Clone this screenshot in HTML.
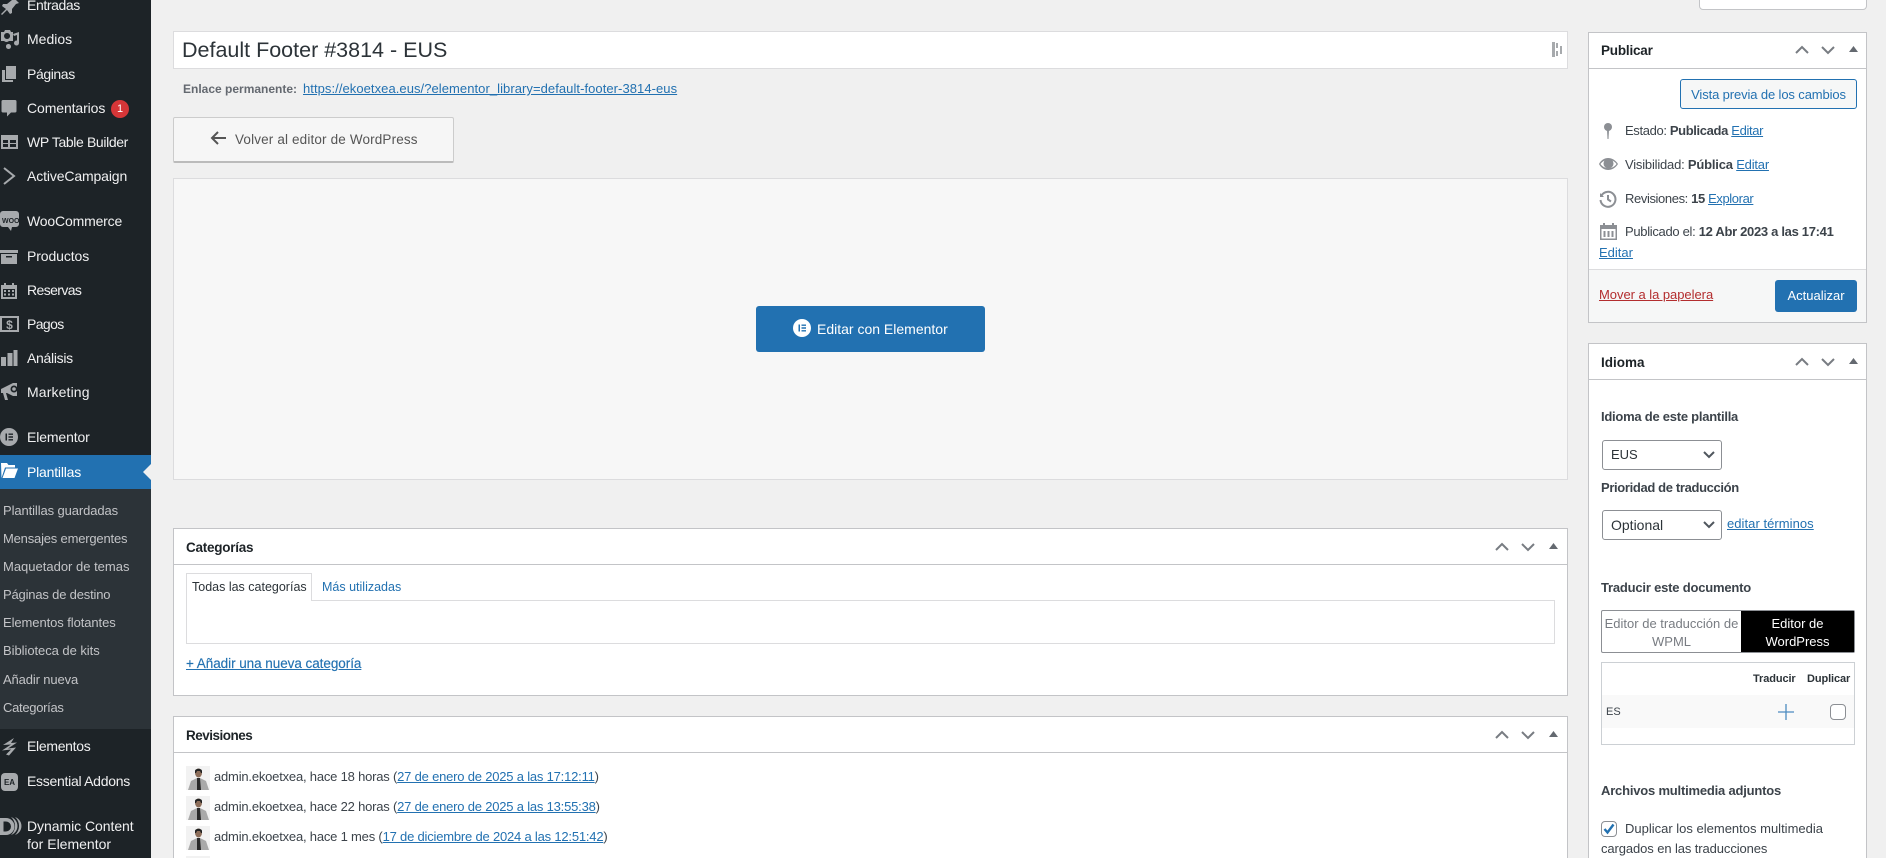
<!DOCTYPE html>
<html lang="es"><head><meta charset="utf-8"><title>Default Footer #3814 - EUS</title>
<style>
*{box-sizing:border-box}
html,body{margin:0;padding:0;width:1886px;height:858px;overflow:hidden;background:#f0f0f0}
#page{position:relative;width:1886px;height:858px;overflow:hidden;background:#f0f0f0;font-family:"Liberation Sans",sans-serif;font-size:13px;color:#3c434a}
.a{position:absolute}
.t{position:absolute;white-space:nowrap;height:20px;line-height:20px}
a{color:#2271b1;text-decoration:underline}
b{font-weight:700}
#side{position:absolute;left:0;top:0;width:151px;height:858px;background:#1d2327}
#side .t{left:27px;font-size:14px;color:#f0f0f1}
#side .s{left:3px;font-size:13px;color:#c3c4c7;letter-spacing:-.1px}
#side svg{position:absolute;left:0;top:0}
.box{position:absolute;background:#fff;border:1px solid #c3c4c7}
.hd{position:absolute;height:1px;width:277px;left:1589px;background:#c3c4c7}
.hm{position:absolute;height:1px;width:1393px;left:174px;background:#c3c4c7}
.h{font-size:13.500px;font-weight:700;color:#1d2327}
.sel{position:absolute;width:120px;height:30px;border:1px solid #8c8f94;border-radius:3px;background:#fff;color:#2c3338;font-size:14px;line-height:28px;padding-left:8px}
.lb{font-weight:700;color:#3c434a;font-size:13px}
</style></head><body>
<div id="page">

<div id="side">
<svg width="151" height="858" viewBox="0 0 151 858" fill="#a7aaad">
<path d="M13 -3l6 6-3 1-4 5 0 4-2 1-3-4-5 5-1-1 5-5-4-3 1-2 4 0 5-4z"/>
<path d="M1 32h3l1-2h5l1 2h2v9h-4a4 4 0 0 1-5 0H1z M7 33a3 3 0 1 0 .1 0z" fill-rule="evenodd"/><path d="M13 34l6-2v11a2.500 2.500 0 1 1-2-2.400V35l-3 1z M8 44a2.500 2.500 0 1 0 3 2.500 2.500 2.500 0 0 0-3-2.500z"/>
<path d="M6 66h10v13H6z M2 70h3v10h8v2H2z"/>
<path d="M3 100h12a1.500 1.500 0 0 1 1.500 1.500V111a1.500 1.500 0 0 1-1.500 1.500h-4l-4 4v-4H3A1.500 1.500 0 0 1 1.500 111v-9.500A1.500 1.500 0 0 1 3 100z"/>
<path d="M1 135h17v14H1z M3 140v3h5v-3z M10 140v3h6v-3z M3 144v3h5v-3z M10 144v3h6v-3z" fill-rule="evenodd"/>
<path d="M4 168l10 8-10 8" fill="none" stroke="#a7aaad" stroke-width="2"/>
<path d="M3 211h13a3 3 0 0 1 3 3v10a3 3 0 0 1-3 3h-4l-1 4-3-4H3a3 3 0 0 1-3-3v-10a3 3 0 0 1 3-3z"/>
<text x="2" y="223" font-size="7" font-weight="700" fill="#1d2327" font-family="Liberation Sans">WOO</text>
<path d="M0 250h18v3H0z M1 254h16v10H1z M6 256v1.500h6V256z" fill-rule="evenodd"/>
<path d="M1 285h3v-2h2v2h6v-2h2v2h3v14H1z M3 289v8h12v-8z" fill-rule="evenodd"/><path d="M4 290h2v2H4z M8 290h2v2H8z M12 290h2v2h-2z M4 293.500h2v2H4z M8 293.500h2v2H8z M12 293.500h2v2h-2z"/>
<path d="M0 316h19v16H0z M2 318v12h15v-12z" fill-rule="evenodd"/>
<text x="9.500" y="329" font-size="12" font-weight="700" text-anchor="middle" font-family="Liberation Sans">$</text>
<path d="M1 357h5v9H1z M7.500 353h5v13h-5z M13.500 350h4v16h-4z"/>
<path d="M1 389l12-6 4 0v13l-4 0-6-3-1 0 2 7h-3l-2-7-2 0z"/><circle cx="14" cy="389" r="3.500" fill="#1d2327"/><circle cx="14" cy="389" r="1.800"/>
<path d="M9 428a9 9 0 1 1 0 18 9 9 0 0 1 0-18z M5.500 433.500v7h1.500v-7z M8.500 433.500v1.400h4.500v-1.400z M8.500 436.300v1.400h4.500v-1.400z M8.500 439.100v1.400h4.500v-1.400z" fill-rule="evenodd"/>
<path d="M14 738L3 745l8-.500-9 6 9-1-5 5 3 1 7-8-8 1 9-6-6 .500z"/>
<path d="M5 773h9a4 4 0 0 1 4 4v10a4 4 0 0 1-4 4H5a4 4 0 0 1-4-4v-10a4 4 0 0 1 4-4z"/>
<text x="9.500" y="785" font-size="8" font-weight="700" text-anchor="middle" fill="#1d2327" font-family="Liberation Sans">EA</text>
<path d="M0 818h6a8.500 8.500 0 0 1 0 17H0z M3.500 821.500v10H6a5 5 0 0 0 0-10z" fill-rule="evenodd"/><path d="M11 817a9.500 9.500 0 0 1 0 18 12 12 0 0 0 0-18z M15 817a9.500 9.500 0 0 1 0 18 12 12 0 0 0 0-18z"/>
</svg>
<div class="t" style="top:-5px;letter-spacing:-.4px">Entradas</div>
<div class="t" style="top:29px">Medios</div>
<div class="t" style="top:64px;letter-spacing:-.4px">Páginas</div>
<div class="t" style="top:98px;letter-spacing:-.1px">Comentarios</div>
<div class="a" style="left:111px;top:100px;width:18px;height:18px;border-radius:9px;background:#d63638;color:#fff;font-size:11px;line-height:18px;text-align:center">1</div>
<div class="t" style="top:132px;letter-spacing:-.37px">WP Table Builder</div>
<div class="t" style="top:166px;letter-spacing:-.13px">ActiveCampaign</div>
<div class="t" style="top:211px;letter-spacing:-.17px">WooCommerce</div>
<div class="t" style="top:246px;letter-spacing:-.1px">Productos</div>
<div class="t" style="top:280px;letter-spacing:-.6px">Reservas</div>
<div class="t" style="top:314px;letter-spacing:-.6px">Pagos</div>
<div class="t" style="top:348px;letter-spacing:-.3px">Análisis</div>
<div class="t" style="top:382px;letter-spacing:.13px">Marketing</div>
<div class="t" style="top:427px;letter-spacing:-.12px">Elementor</div>
<div class="a" style="left:0;top:455px;width:151px;height:34px;background:#2271b1"></div>
<svg style="top:455px" width="151" height="34" viewBox="0 0 151 34"><path d="M1 8h6l1.500 2H15v2.500H5L1.500 23z M6 13.500h12L14.500 23H2.500z" fill="#fff"/><path d="M151 9l-8 8 8 8z" fill="#f0f0f0"/></svg>
<div class="t" style="top:462px;color:#fff;letter-spacing:-.2px">Plantillas</div>
<div class="a" style="left:0;top:489px;width:151px;height:240px;background:#2c3338"></div>
<div class="t s" style="top:501px">Plantillas guardadas</div>
<div class="t s" style="top:529px;letter-spacing:-.19px">Mensajes emergentes</div>
<div class="t s" style="top:557px;letter-spacing:0">Maquetador de temas</div>
<div class="t s" style="top:585px;letter-spacing:-.18px">Páginas de destino</div>
<div class="t s" style="top:613px;letter-spacing:-.08px">Elementos flotantes</div>
<div class="t s" style="top:641px;letter-spacing:-.05px">Biblioteca de kits</div>
<div class="t s" style="top:670px;letter-spacing:-.13px">Añadir nueva</div>
<div class="t s" style="top:698px;letter-spacing:-.3px">Categorías</div>
<div class="t" style="top:736px;letter-spacing:-.3px">Elementos</div>
<div class="t" style="top:771px;letter-spacing:-.28px">Essential Addons</div>
<div class="t" style="top:816px;letter-spacing:-.05px">Dynamic Content</div>
<div class="t" style="top:834px">for Elementor</div>
</div>

<!-- title -->
<div class="a" style="left:173px;top:31px;width:1395px;height:38px;background:#fff;border:1px solid #dcdcde"></div>
<div class="t" style="left:182px;top:40px;font-size:21.500px;color:#2c3338">Default Footer #3814 - EUS</div>
<svg class="a" style="left:1552px;top:41px" width="12" height="17" viewBox="0 0 12 17" fill="#a7aaad"><path d="M0 1h3v15H0z M4 2h2v5H4z M4 10h2v5H4z M8 5h2v8H8z"/></svg>
<div class="t" style="left:183px;top:79px;font-size:12px;color:#646970"><b>Enlace permanente:</b></div>
<div class="t" style="left:303px;top:79px;font-size:13px;letter-spacing:.06px"><a href="#">https://ekoetxea.eus/?elementor_library=default-footer-3814-eus</a></div>

<!-- volver -->
<div class="a" style="left:173px;top:117px;width:281px;height:46px;background:#f6f6f6;border:1px solid #ccc;border-bottom:2px solid #bbb;border-radius:2px"></div>
<svg class="a" style="left:210px;top:130px" width="17" height="16" viewBox="0 0 17 16" fill="none" stroke="#555" stroke-width="2"><path d="M16 8H2M8 2L2 8l6 6"/></svg>
<div class="t" style="left:235px;top:130px;font-size:13.500px;color:#555;letter-spacing:.15px">Volver al editor de WordPress</div>

<!-- elementor area -->
<div class="a" style="left:173px;top:178px;width:1395px;height:302px;background:#f7f7f7;border:1px solid #dcdcde"></div>
<div class="a" style="left:756px;top:306px;width:229px;height:46px;background:#2271b1;border-radius:3px"></div>
<svg class="a" style="left:793px;top:319px" width="18" height="18" viewBox="0 0 18 18"><circle cx="9" cy="9" r="9" fill="#fff"/><path d="M5.500 5.500H7v7H5.500z M8.500 5.500H13v1.400H8.500z M8.500 8.300H13v1.400H8.500z M8.500 11.100H13v1.400H8.500z" fill="#2271b1"/></svg>
<div class="t" style="left:817px;top:319px;font-size:14px;color:#fff">Editar con Elementor</div>

<!-- categorias -->
<div class="box" style="left:173px;top:528px;width:1395px;height:168px"></div>
<div class="hm" style="top:564px"></div>
<div class="t h" style="left:186px;top:538px;letter-spacing:-.25px">Categorías</div>
<div class="a" style="left:186px;top:600px;width:1369px;height:44px;background:#fff;border:1px solid #dcdcde"></div>
<div class="a" style="left:186px;top:573px;width:126px;height:28px;background:#fff;border:1px solid #dcdcde;border-bottom:0"></div>
<div class="t" style="left:192px;top:577px;font-size:12.500px;color:#2c3338">Todas las categorías</div>
<div class="t" style="left:322px;top:577px;font-size:12.500px;color:#2271b1">Más utilizadas</div>
<div class="t" style="left:186px;top:654px;font-size:13.500px;letter-spacing:-.05px"><a href="#" style="-webkit-text-stroke:.15px #2271b1">+ Añadir una nueva categoría</a></div>

<!-- revisiones -->
<div class="box" style="left:173px;top:716px;width:1395px;height:170px"></div>
<div class="hm" style="top:752px"></div>
<div class="t h" style="left:186px;top:726px;letter-spacing:-.5px">Revisiones</div>
<svg width="0" height="0" style="position:absolute"><defs><g id="av"><rect width="24" height="24" fill="#f2f2f2"/><path d="M2 24l3-9 6-3h3l6 3 3 9z" fill="#a9a9a9"/><path d="M11 12h3l1 12h-4z" fill="#2a2a2a"/><ellipse cx="12.500" cy="7" rx="3.500" ry="4.500" fill="#8d6e5a"/><path d="M9 5c0-3 7-3 7 0v2h-1l-1-2h-3l-1 2H9z" fill="#222"/></g>
<g id="tg" fill="none" stroke="#787c82" stroke-width="2"><path d="M1 9l6-6 6 6"/><path d="M27 3l6 6 6-6"/><path d="M54 8h9l-4.500-6z" fill="#646970" stroke="none"/></g></defs></svg>
<svg class="a" style="left:186px;top:766px" width="24" height="24"><use href="#av"/></svg>
<svg class="a" style="left:186px;top:796px" width="24" height="24"><use href="#av"/></svg>
<svg class="a" style="left:186px;top:826px" width="24" height="24"><use href="#av"/></svg>
<svg class="a" style="left:186px;top:856px" width="24" height="24"><use href="#av"/></svg>
<div class="t" style="left:214px;top:767px;letter-spacing:-.2px">admin.ekoetxea, hace 18 horas (<a href="#">27 de enero de 2025 a las 17:12:11</a>)</div>
<div class="t" style="left:214px;top:797px;letter-spacing:-.2px">admin.ekoetxea, hace 22 horas (<a href="#">27 de enero de 2025 a las 13:55:38</a>)</div>
<div class="t" style="left:214px;top:827px;letter-spacing:-.2px">admin.ekoetxea, hace 1 mes (<a href="#">17 de diciembre de 2024 a las 12:51:42</a>)</div>

<!-- toggles main -->
<svg class="a" style="left:1495px;top:541px" width="70" height="12"><use href="#tg"/></svg>
<svg class="a" style="left:1495px;top:729px" width="70" height="12"><use href="#tg"/></svg>

<!-- top-right tab -->
<div class="a" style="left:1699px;top:-5px;width:168px;height:15px;background:#fff;border:1px solid #c3c4c7;border-radius:0 0 4px 4px"></div>

<!-- publicar -->
<div class="box" style="left:1588px;top:32px;width:279px;height:291px"></div>
<div class="a" style="left:1589px;top:269px;width:277px;height:53px;background:#f6f7f7;border-top:1px solid #dcdcde"></div>
<div class="hd" style="top:68px"></div>
<svg class="a" style="left:1795px;top:44px" width="70" height="12"><use href="#tg"/></svg>
<div class="t h" style="left:1601px;top:41px;letter-spacing:-.2px">Publicar</div>
<div class="a" style="left:1680px;top:79px;width:177px;height:30px;background:#f6f7f7;border:1px solid #2271b1;border-radius:3px;color:#2271b1;font-size:13px;line-height:29px;text-align:center;letter-spacing:-.12px">Vista previa de los cambios</div>
<svg class="a" style="left:1600px;top:123px" width="18" height="16" viewBox="0 0 18 16" fill="#8c8f94"><circle cx="8" cy="4" r="4"/><path d="M7 7h2l-.500 9h-1z"/></svg>
<div class="t" style="left:1625px;top:121px;letter-spacing:-.36px">Estado: <b>Publicada</b> <a href="#">Editar</a></div>
<svg class="a" style="left:1599px;top:157px" width="20" height="14" viewBox="0 0 20 14"><path d="M0 7c4-8 14-8 19 0-5 8-15 8-19 0z" fill="#8c8f94"/><path d="M1.500 7c3.500 5.500 12.500 5.500 16 0-3.500-5.500-12.500-5.500-16 0z" fill="#fff"/><circle cx="9.500" cy="6.500" r="5" fill="#8c8f94"/></svg>
<div class="t" style="left:1625px;top:155px;letter-spacing:-.2px">Visibilidad: <b>Pública</b> <a href="#">Editar</a></div>
<svg class="a" style="left:1599px;top:190px" width="18" height="18" viewBox="0 0 18 18" fill="none" stroke="#8c8f94" stroke-width="2"><path d="M2.500 5.500A7.500 7.500 0 1 1 1.500 10"/><path d="M1 3v4h4z" fill="#8c8f94" stroke="none"/><path d="M9 5v4.500l3 2"/></svg>
<div class="t" style="left:1625px;top:189px;letter-spacing:-.39px">Revisiones: <b>15</b> <a href="#">Explorar</a></div>
<svg class="a" style="left:1600px;top:223px" width="17" height="17" viewBox="0 0 17 17" fill="#8c8f94"><path d="M0 2h3V0h2v2h7V0h2v2h3v15H0z M1.500 6v9.500h14V6z" fill-rule="evenodd"/><path d="M3.500 8h2v6h-2z M7.500 8h2v6h-2z M11.500 8h2v6h-2z"/></svg>
<div class="t" style="left:1625px;top:222px;letter-spacing:-.31px">Publicado el: <b>12 Abr 2023 a las 17:41</b></div>
<div class="t" style="left:1599px;top:243px"><a href="#">Editar</a></div>
<div class="t" style="left:1599px;top:285px;letter-spacing:-.04px"><a href="#" style="color:#b32d2e">Mover a la papelera</a></div>
<div class="a" style="left:1775px;top:280px;width:82px;height:32px;background:#2271b1;border-radius:3px;color:#fff;font-size:13px;line-height:32px;text-align:center">Actualizar</div>

<!-- idioma -->
<div class="box" style="left:1588px;top:343px;width:279px;height:540px"></div>
<div class="hd" style="top:379px"></div>
<svg class="a" style="left:1795px;top:356px" width="70" height="12"><use href="#tg"/></svg>
<div class="t h" style="left:1601px;top:353px">Idioma</div>
<div class="t lb" style="left:1601px;top:407px;letter-spacing:-.25px">Idioma de este plantilla</div>
<div class="sel" style="left:1602px;top:440px;padding-left:8px;font-size:13px">EUS</div>
<svg class="a" style="left:1703px;top:451px" width="12" height="8" fill="none" stroke="#50575e" stroke-width="2"><path d="M1 1l5 5 5-5"/></svg>
<div class="t lb" style="left:1601px;top:478px;letter-spacing:-.35px">Prioridad de traducción</div>
<div class="sel" style="left:1602px;top:510px;font-size:14px">Optional</div>
<svg class="a" style="left:1703px;top:521px" width="12" height="8" fill="none" stroke="#50575e" stroke-width="2"><path d="M1 1l5 5 5-5"/></svg>
<div class="t" style="left:1727px;top:514px;letter-spacing:.05px"><a href="#">editar términos</a></div>
<div class="t lb" style="left:1601px;top:578px;letter-spacing:-.2px">Traducir este documento</div>
<div class="a" style="left:1601px;top:610px;width:254px;height:43px;border:1px solid #8c8f94;border-radius:2px;background:#fff"></div>
<div class="a" style="left:1741px;top:611px;width:113px;height:41px;background:#000"></div>
<div class="a" style="left:1602px;top:615px;width:139px;font-size:13px;line-height:18px;text-align:center;color:#787c82;white-space:nowrap">Editor de traducción de<br>WPML</div>
<div class="a" style="left:1741px;top:615px;width:113px;font-size:13px;line-height:18px;text-align:center;color:#fff">Editor de<br>WordPress</div>
<div class="a" style="left:1601px;top:662px;width:254px;height:83px;border:1px solid #ccd0d4;background:#fff"></div>
<div class="a" style="left:1602px;top:695px;width:252px;height:33px;background:#f9f9f9"></div>
<div class="t" style="left:1753px;top:669px;font-size:11px;font-weight:700;color:#2c3338;letter-spacing:-.1px">Traducir</div>
<div class="t" style="left:1807px;top:669px;font-size:11px;font-weight:700;color:#2c3338;letter-spacing:-.1px">Duplicar</div>
<div class="t" style="left:1606px;top:702px;font-size:11px">ES</div>
<svg class="a" style="left:1778px;top:704px" width="16" height="16"><path d="M0 8h16M8 0v16" stroke="#2271b1" stroke-opacity=".8" stroke-width="1.300"/></svg>
<div class="a" style="left:1830px;top:704px;width:16px;height:16px;border:1px solid #8c8f94;border-radius:4px;background:#fff"></div>
<div class="t lb" style="left:1601px;top:781px;letter-spacing:-.2px">Archivos multimedia adjuntos</div>
<div class="a" style="left:1601px;top:821px;width:16px;height:16px;border:1px solid #8c8f94;border-radius:4px;background:#fff"></div>
<svg class="a" style="left:1603px;top:823px" width="12" height="12"><path d="M1.500 6l3 3.500 6-8" fill="none" stroke="#2271b1" stroke-width="2.400"/></svg>
<div class="t" style="left:1625px;top:819px;letter-spacing:0">Duplicar los elementos multimedia</div>
<div class="t" style="left:1601px;top:839px;letter-spacing:-.1px">cargados en las traducciones</div>
</div>
</body></html>
